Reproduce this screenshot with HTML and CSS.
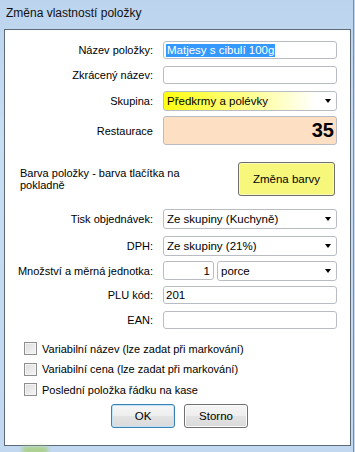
FILE: index.html
```html
<!DOCTYPE html>
<html lang="cs">
<head>
  <meta charset="UTF-8" />
  <title>Změna vlastností položky</title>
  <link rel="stylesheet" href="styles.css">
</head>
<body>
  <div class="window">
    <div class="titlebar">Změna vlastností položky</div>
    <div class="client">
      <div class="row h18 mb7">
        <label>Název položky:</label>
        <div class="field"><span class="sel">Matjesy s cibulí 100g</span></div>
      </div>
      <div class="row h18 mb7">
        <label>Zkrácený název:</label>
        <div class="field"></div>
      </div>
      <div class="row h20 mb5">
        <label>Skupina:</label>
        <div class="field combo yellow">Předkrmy a polévky<span class="arrow"></span></div>
      </div>
      <div class="row h29 mb17">
        <label>Restaurace</label>
        <div class="field price">35</div>
      </div>
      <div class="color-row">
        <div class="color-text">Barva položky - barva tlačítka na pokladně</div>
        <button class="color-btn">Změna barvy</button>
      </div>
      <div class="row h20 mb7">
        <label>Tisk objednávek:</label>
        <div class="field combo">Ze skupiny (Kuchyně)<span class="arrow"></span></div>
      </div>
      <div class="row h20 mb5">
        <label>DPH:</label>
        <div class="field combo">Ze skupiny (21%)<span class="arrow"></span></div>
      </div>
      <div class="row h20 mb5">
        <label>Množství a měrná jednotka:</label>
        <div class="split">
          <div class="field qty">1</div>
          <div class="field combo unit">porce<span class="arrow"></span></div>
        </div>
      </div>
      <div class="row h18 mb7">
        <label>PLU kód:</label>
        <div class="field">201</div>
      </div>
      <div class="row h18 mb13">
        <label>EAN:</label>
        <div class="field"></div>
      </div>
      <div class="checks">
        <div class="check"><span class="box"></span>Variabilní název (lze zadat při markování)</div>
        <div class="check"><span class="box"></span>Variabilní cena (lze zadat při markování)</div>
        <div class="check"><span class="box"></span>Poslední položka řádku na kase</div>
      </div>
      <div class="actions">
        <button class="btn default">OK</button>
        <button class="btn">Storno</button>
      </div>
    </div>
    <div class="bottom"><span class="blob"></span></div>
  </div>
</body>
</html>
```

FILE: styles.css
```css
body {
  margin: 0;
  width: 355px;
  height: 452px;
  overflow: hidden;
  font-family: 'Liberation Sans', Arial, sans-serif;
  font-size: 11px;
  color: #000;
  background: linear-gradient(180deg, #bcd4ee 0%, #c9ddf3 30%, #c2d8f0 100%);
}
.window {
  height: 452px;
  display: flex;
  flex-direction: column;
  border-right: 1px solid #7a8ea6;
  box-sizing: border-box;
  width: 354px;
}
.titlebar {
  height: 29px;
  box-sizing: border-box;
  padding: 5px 0 0 6px;
  font-size: 12px;
  line-height: 16px;
  color: #111;
}
.client {
  margin-left: 4px;
  width: 347px;
  height: 417px;
  box-sizing: border-box;
  border: 1px solid #5d6a78;
  background: #fff;
  padding-top: 11px;
}
.row {
  display: flex;
  align-items: center;
}
.row label {
  width: 148px;
  text-align: right;
  margin-right: 10px;
  flex: none;
}
.h18 { height: 18px; }
.h20 { height: 20px; }
.h29 { height: 29px; }
.mb5 { margin-bottom: 5px; }
.mb7 { margin-bottom: 7px; }
.mb13 { margin-bottom: 13px; }
.mb17 { margin-bottom: 17px; }
.field {
  position: relative;
  width: 174px;
  height: 100%;
  box-sizing: border-box;
  border: 1px solid #b9bdc3;
  border-radius: 3px;
  background: #fff;
  padding-left: 2px;
  display: flex;
  align-items: center;
  font-size: 11.5px;
  white-space: nowrap;
}
.sel {
  background: #3399ff;
  color: #fff;
  padding: 0 1px;
  line-height: 13px;
}
.combo {
  padding-left: 3px;
}
.yellow {
  background: linear-gradient(90deg, #ffff10 0%, #ffffa0 55%, #ffffff 88%);
}
.arrow {
  position: absolute;
  right: 5px;
  top: 50%;
  margin-top: -2px;
  border-left: 3.5px solid transparent;
  border-right: 3.5px solid transparent;
  border-top: 4px solid #000;
}
.price {
  background: #fddfc4;
  justify-content: flex-end;
  padding-right: 2px;
  font-size: 20px;
  font-weight: bold;
}
.split {
  display: flex;
  gap: 3px;
  width: 174px;
  height: 100%;
}
.qty {
  width: 51px;
  justify-content: flex-end;
  padding-right: 3px;
  height: 19px;
}
.unit {
  width: 120px;
}
.color-row {
  display: flex;
  align-items: center;
  justify-content: space-between;
  padding: 0 15px 0 15px;
  height: 34px;
  margin-bottom: 13px;
}
.color-text {
  width: 170px;
  line-height: 12px;
}
.color-btn {
  width: 97px;
  height: 34px;
  background: #f7f77c;
  border: 1px solid #6f6f6f;
  border-radius: 3px;
  box-shadow: inset 0 0 0 1px #fbfbb8;
  font-family: inherit;
  font-size: 11.5px;
  color: #000;
  padding: 0;
}
.checks {
  padding-left: 19px;
}
.check {
  display: flex;
  align-items: center;
  height: 13px;
  margin-bottom: 7.5px;
}
.box {
  width: 13px;
  height: 13px;
  box-sizing: border-box;
  border: 1px solid #8e8f8f;
  background: linear-gradient(135deg, #dcdcdc, #f6f6f6);
  box-shadow: inset 0 0 0 1px #f4f4f4;
  margin-right: 5px;
}
.actions {
  display: flex;
  justify-content: center;
  gap: 9px;
  padding-left: 4px;
  margin-top: 8px;
}
.btn {
  width: 64px;
  height: 24px;
  font-family: inherit;
  font-size: 11.5px;
  color: #000;
  border: 1px solid #707070;
  border-radius: 3px;
  background: linear-gradient(180deg, #f6f6f6 0%, #eeeeee 50%, #e3e3e3 51%, #dadada 100%);
  box-shadow: inset 0 0 0 1px #fcfcfc;
  padding: 0;
}
.btn.default {
  border-color: #3c7fb1;
  box-shadow: inset 0 0 0 1px #bfe4f7;
}
.bottom {
  position: relative;
  flex: 1;
}
.blob {
  position: absolute;
  left: 22px;
  top: 1px;
  width: 26px;
  height: 6px;
  border-radius: 4px;
  background: #a8cf7a;
  filter: blur(2px);
}
```
